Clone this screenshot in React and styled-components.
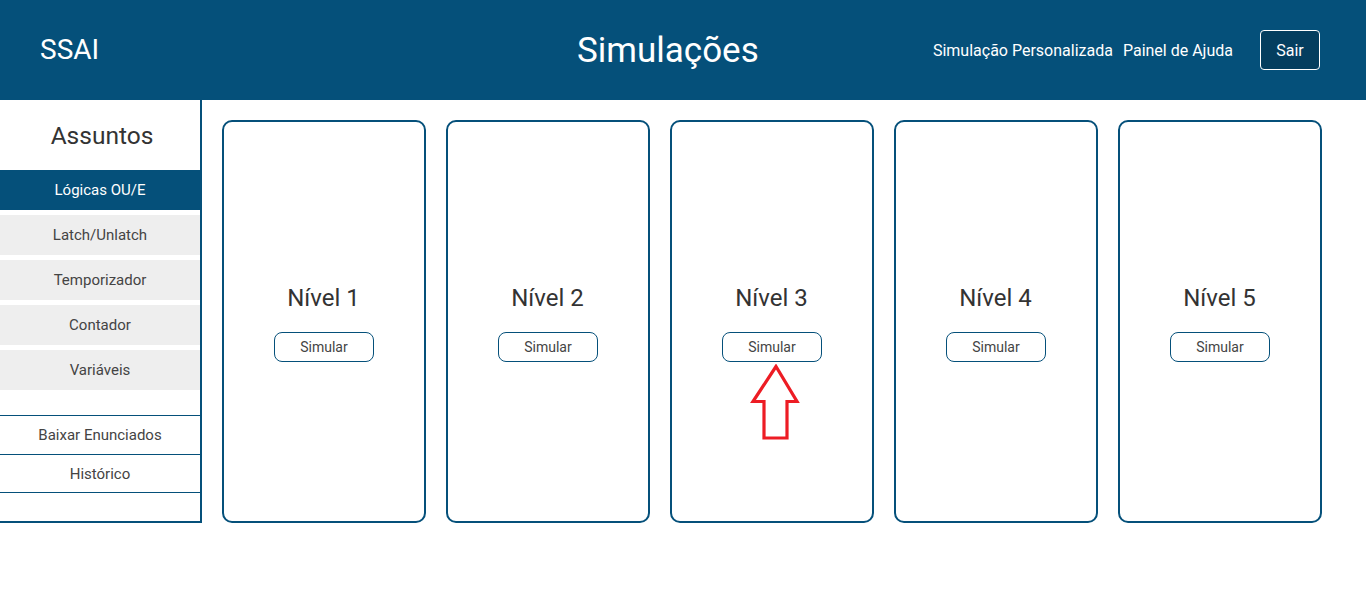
import React from "react";
import styled, { createGlobalStyle } from "styled-components";

const BLUE = "#05507a";

const Global = createGlobalStyle`
  html, body { margin: 0; padding: 0; background: #fff; }
  body { font-family: Roboto, "Liberation Sans", Arial, sans-serif; color: #333; }
  * { box-sizing: border-box; }
`;

const Header = styled.header`
  height: 100px;
  background: ${BLUE};
  display: flex;
  align-items: center;
  padding: 0 46px 0 40px;
  color: #fff;
`;

const Brand = styled.div`
  flex: 0 0 537px;
  font-size: 28px;
  line-height: 1;
`;

const Title = styled.h1`
  margin: 0;
  font-size: 35px;
  font-weight: 400;
  line-height: 1;
`;

const Nav = styled.nav`
  margin-left: auto;
  display: flex;
  align-items: center;
`;

const NavLink = styled.span`
  font-size: 16px;
  margin-right: 10px;
  &:nth-of-type(2) { margin-right: 27px; }
`;

const ExitButton = styled.button`
  width: 60px;
  height: 40px;
  background: #043e5f;
  border: 1px solid #fff;
  border-radius: 4px;
  color: #fff;
  font-family: inherit;
  font-size: 16px;
  font-weight: 400;
`;

const Body = styled.div`
  display: flex;
  align-items: flex-start;
`;

const Sidebar = styled.aside`
  width: 202px;
  height: 423px;
  border-right: 2px solid ${BLUE};
  border-bottom: 2px solid ${BLUE};
  display: flex;
  flex-direction: column;
`;

const SideTitle = styled.div`
  height: 70px;
  display: flex;
  align-items: center;
  justify-content: center;
  padding: 0 0 0 4px;
  font-size: 24.5px;
  color: #333;
`;

const Topic = styled.div`
  height: 40px;
  margin-bottom: 5px;
  display: flex;
  align-items: center;
  justify-content: center;
  font-size: 15px;
  background: ${(p) => (p.$active ? BLUE : "#eeeeee")};
  color: ${(p) => (p.$active ? "#fff" : "#444")};
  font-weight: 400;
`;

const LinkList = styled.div`
  margin-top: 20px;
  border-top: 1px solid ${BLUE};
`;

const SideLink = styled.div`
  height: ${(p) => p.$h}px;
  display: flex;
  align-items: center;
  justify-content: center;
  font-size: 15px;
  color: #444;
  border-bottom: 1px solid ${BLUE};
`;

const Main = styled.main`
  display: flex;
  gap: 20px;
  padding: 20px;
`;

const Card = styled.div`
  position: relative;
  width: 204px;
  height: 403px;
  border: 2px solid ${BLUE};
  border-radius: 10px;
  display: flex;
  flex-direction: column;
  align-items: center;
  justify-content: center;
  padding-top: 3px;
`;

const LevelTitle = styled.div`
  font-size: 24px;
  color: #333;
  margin: 0 1px 20px 0;
  line-height: 28px;
`;

const SimButton = styled.button`
  width: 100px;
  height: 30px;
  border: 1px solid ${BLUE};
  border-radius: 8px;
  background: #fff;
  font-family: inherit;
  font-size: 14px;
  color: #444;
`;

const Arrow = styled.svg`
  position: absolute;
  left: 78px;
  top: 242px;
`;

const topics = ["Lógicas OU/E", "Latch/Unlatch", "Temporizador", "Contador", "Variáveis"];

export default function App() {
  return (
    <>
      <Global />
      <Header>
        <Brand>SSAI</Brand>
        <Title>Simulações</Title>
        <Nav>
          <NavLink>Simulação Personalizada</NavLink>
          <NavLink>Painel de Ajuda</NavLink>
          <ExitButton>Sair</ExitButton>
        </Nav>
      </Header>
      <Body>
        <Sidebar>
          <SideTitle>Assuntos</SideTitle>
          {topics.map((t, i) => (
            <Topic key={t} $active={i === 0}>{t}</Topic>
          ))}
          <LinkList>
            <SideLink $h={39}>Baixar Enunciados</SideLink>
            <SideLink $h={38}>Histórico</SideLink>
          </LinkList>
        </Sidebar>
        <Main>
          {[1, 2, 3, 4, 5].map((n) => (
            <Card key={n}>
              <LevelTitle>Nível {n}</LevelTitle>
              <SimButton>Simular</SimButton>
              {n === 3 && (
                <Arrow width="50" height="78" viewBox="0 0 50 78">
                  <polygon
                    points="26,2.5 3,37.5 14,37.5 14,74 37,74 37,37.5 47,37.5"
                    fill="none"
                    stroke="#ed1c24"
                    strokeWidth="3.2"
                  />
                </Arrow>
              )}
            </Card>
          ))}
        </Main>
      </Body>
    </>
  );
}
